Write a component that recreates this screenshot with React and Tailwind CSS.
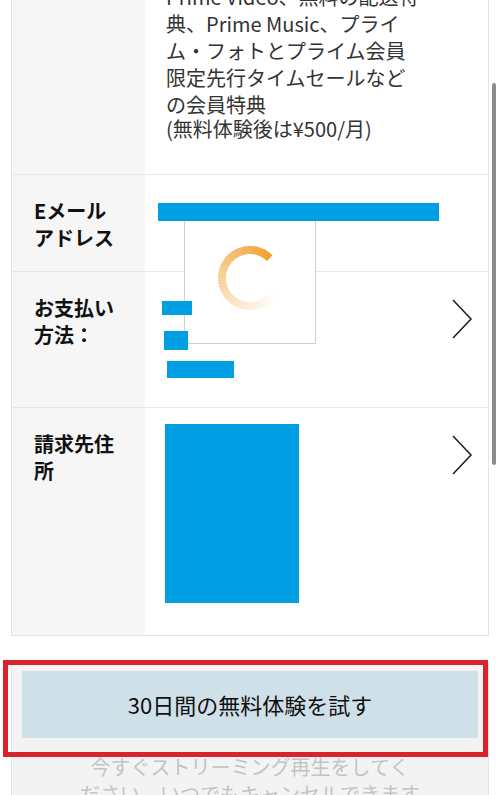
import React from 'react';

const FONT = { fontFamily: '"Noto Sans CJK JP", "Noto Sans", sans-serif' };

// loading ring: orange head at ~1:30, fading out counter-clockwise
function Spinner() {
  const N = 48;
  const start = 45;
  const span = 290;
  const r = 28;
  const pt = (a) => {
    const rad = (a * Math.PI) / 180;
    return [40 + r * Math.sin(rad), 40 - r * Math.cos(rad)];
  };
  const segs = [];
  for (let i = 0; i < N; i++) {
    const a1 = start - (span * i) / N;
    const a2 = start - (span * (i + 1)) / N - 0.6;
    const [x1, y1] = pt(a1);
    const [x2, y2] = pt(a2);
    const op = Math.pow(1 - i / N, 1.3);
    segs.push(
      <path
        key={i}
        d={`M ${x1} ${y1} A ${r} ${r} 0 0 0 ${x2} ${y2}`}
        stroke="#f0a02e"
        strokeOpacity={op}
        strokeWidth="8"
        fill="none"
      />
    );
  }
  return (
    <svg width="80" height="80" viewBox="0 0 80 80">
      {segs}
    </svg>
  );
}

const Chevron = () => (
  <svg width="22" height="40" viewBox="0 0 22 40" className="shrink-0">
    <polyline points="2,1 20,20 2,39" fill="none" stroke="#222" strokeWidth="1.6" />
  </svg>
);

const Label = ({ children }) => (
  <div className="w-[133px] shrink-0 bg-[#f6f6f6] pl-[22px] pt-[22px] text-[20px] font-bold leading-[27px] text-[#111]">
    {children}
  </div>
);

export default function App() {
  return (
    <div className="relative h-[795px] w-[500px] overflow-hidden bg-white" style={FONT}>
      {/* details card */}
      <div className="mx-[11px] -mt-[40px] border border-[#e3e3e3]">
        {/* plan row */}
        <div className="flex h-[213px]">
          <div className="w-[133px] shrink-0 bg-[#f6f6f6]" />
          <div className="flex-1 pl-[21px] pt-[22px] text-[20px] leading-[27px] text-[#333]">
            <div>Prime Video、無料の配送特</div>
            <div>典、Prime Music、プライ</div>
            <div>ム・フォトとプライム会員</div>
            <div>限定先行タイムセールなど</div>
            <div>の会員特典</div>
            <div className="text-[20px] leading-[21px]">(無料体験後は¥500/月)</div>
          </div>
        </div>

        {/* email */}
        <div className="flex h-[97px] border-t border-[#e7e7e7]">
          <Label>
            Eメール
            <br />
            アドレス
          </Label>
          <div className="flex-1 pl-[13px] pt-[28px]">
            <div className="relative z-10 h-[18px] w-[281px] bg-[#009fe3]" />
          </div>
        </div>

        {/* payment */}
        <div className="flex h-[136px] border-t border-[#e7e7e7]">
          <Label>
            お支払い
            <br />
            方法：
          </Label>
          <div className="flex flex-1 items-start justify-between pr-[15px] pt-[27px]">
            <div className="flex flex-col pt-[2px]">
              <div className="relative z-10 ml-[17px] h-[14px] w-[30px] bg-[#009fe3]" />
              <div className="relative z-10 ml-[19px] mt-[16px] h-[19px] w-[24px] bg-[#009fe3]" />
              <div className="relative z-10 ml-[22px] mt-[11px] h-[17px] w-[67px] bg-[#009fe3]" />
            </div>
            <Chevron />
          </div>
        </div>

        {/* billing address */}
        <div className="flex h-[228px] border-t border-[#e7e7e7]">
          <Label>
            請求先住
            <br />
            所
          </Label>
          <div className="flex flex-1 items-start justify-between pr-[15px] pt-[16px]">
            <div className="ml-[20px] h-[179px] w-[134px] bg-[#009fe3]" />
            <div className="pt-[11px]">
              <Chevron />
            </div>
          </div>
        </div>
      </div>

      {/* trial button area */}
      <div className="mx-[11px] mt-[27px] border-x border-t border-[#e3e3e3] bg-[#f3f3f3] px-[10px] pt-[7px]">
        <div className="flex h-[67px] items-center justify-center bg-[#cfe0e9] text-[22px] text-[#111]">
          30日間の無料体験を試す
        </div>
        <div className="mt-[15px] text-center text-[20px] leading-[27px] text-[#c4c4c4]">
          今すぐストリーミング再生をしてく
          <br />
          ださい。いつでもキャンセルできます
        </div>
      </div>

      {/* loading popup */}
      <div className="absolute left-[184px] top-[218px] flex h-[126px] w-[132px] items-center justify-center border border-[#cfcfcf] bg-white pb-[6px]">
        <Spinner />
      </div>

      {/* red highlight */}
      <div className="absolute left-[3px] top-[660px] h-[97px] w-[485px] border-[5px] border-[#d8222c]" />

      {/* scrollbar thumb */}
      <div className="absolute left-[492px] top-[83px] h-[382px] w-[4px] rounded-full bg-[#8c8c8c]" />
    </div>
  );
}
